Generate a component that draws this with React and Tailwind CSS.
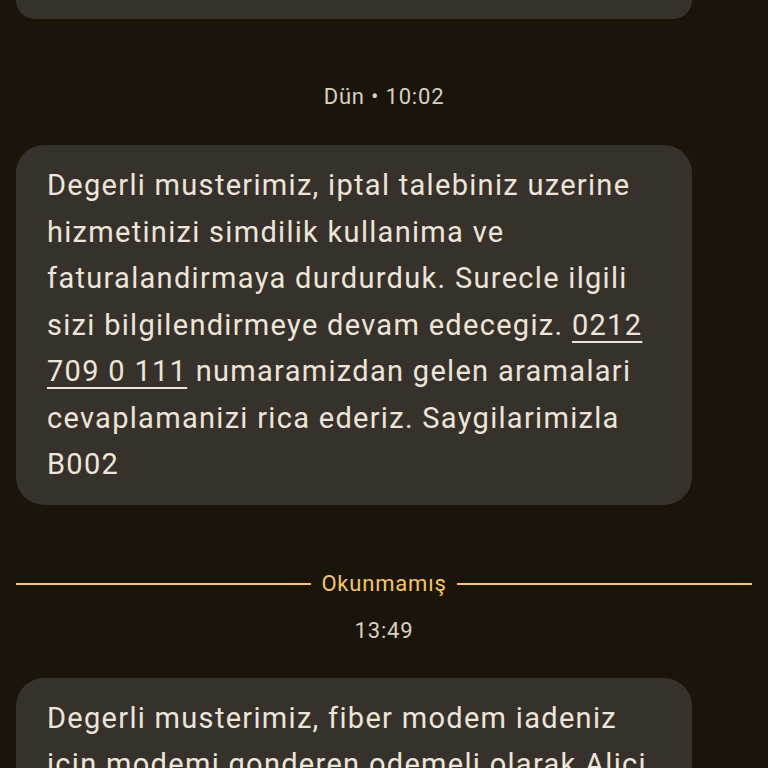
import React from "react";

const FONT = { fontFamily: "Roboto, 'Noto Sans', sans-serif" };

function Bubble({ children, className = "" }) {
  return (
    <div
      className={`ml-4 w-[676px] whitespace-nowrap rounded-[28px] bg-[#36322b] pl-[31px] pr-4 text-[29px] leading-[46.5px] tracking-[1.3px] text-[#ede5d9] ${className}`}
    >
      {children}
    </div>
  );
}

function Stamp({ children, className = "" }) {
  return (
    <div className={`text-center text-[22px] leading-[28px] tracking-[0.8px] text-[#d8d0c3] ${className}`}>
      {children}
    </div>
  );
}

export default function App() {
  return (
    <div className="h-[768px] w-[768px] overflow-hidden bg-[#1b1409]" style={FONT}>
      {/* tail of the previous message */}
      <div className="ml-4 h-[19px] w-[676px] rounded-b-[28px] bg-[#36322b]" />

      <Stamp className="mt-[64px]">Dün • 10:02</Stamp>

      <Bubble className="mt-[34px] py-[17px]">
        Degerli musterimiz, iptal talebiniz uzerine
        <br />
        hizmetinizi simdilik kullanima ve
        <br />
        faturalandirmaya durdurduk. Surecle ilgili
        <br />
        sizi bilgilendirmeye devam edecegiz.{" "}
        <span className="underline decoration-2 underline-offset-[6px]">0212</span>
        <br />
        <span className="underline decoration-2 underline-offset-[6px]">709 0 111</span> numaramizdan gelen aramalari
        <br />
        cevaplamanizi rica ederiz. Saygilarimizla
        <br />
        B002
      </Bubble>

      {/* unread divider */}
      <div className="mt-[65px] flex items-center gap-2.5 px-4">
        <div className="h-[2px] flex-1 bg-[#f2c66d]" />
        <div className="text-[22px] leading-[28px] tracking-[0.8px] text-[#f2c66d]">Okunmamış</div>
        <div className="h-[2px] flex-1 bg-[#f2c66d]" />
      </div>

      <Stamp className="mt-[19px]">13:49</Stamp>

      <Bubble className="mt-[33px] pt-[17px] pb-[17px]">
        Degerli musterimiz, fiber modem iadeniz
        <br />
        icin modemi gonderen odemeli olarak Alici
        <br />
        kargo ile gonderebilirsiniz. Kargo sube
      </Bubble>
    </div>
  );
}
